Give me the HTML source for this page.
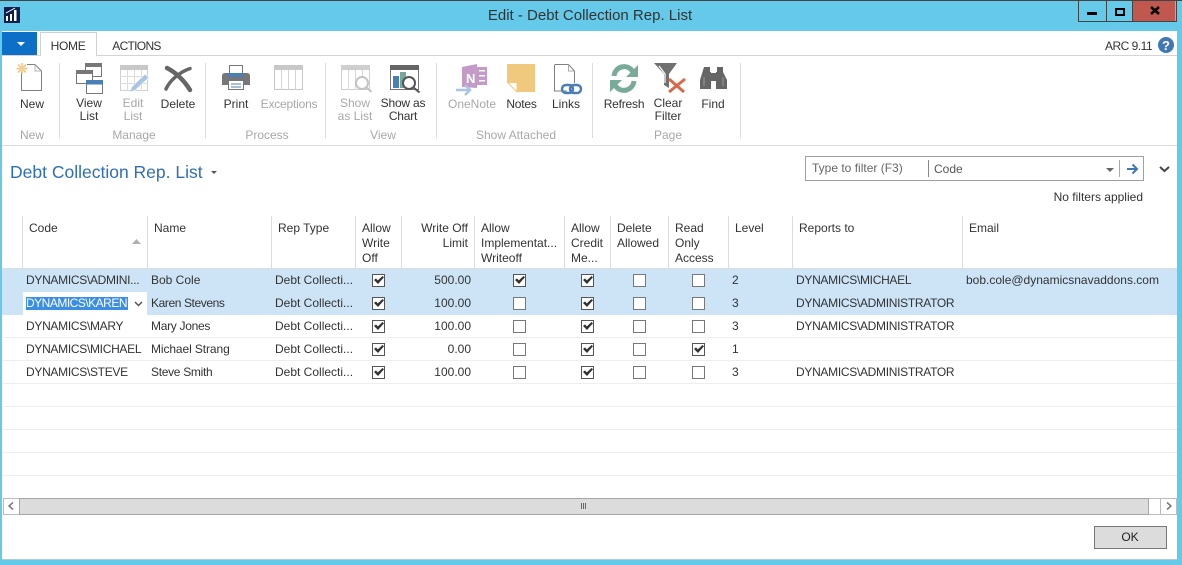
<!DOCTYPE html>
<html><head><meta charset="utf-8"><style>
html,body{margin:0;padding:0}
body{width:1182px;height:565px;position:relative;overflow:hidden;background:#65c9ea;font:12px "Liberation Sans",sans-serif;color:#333}
.t{position:absolute;white-space:nowrap;line-height:14px}
.c{text-align:center;transform:translateX(-50%)}
.r{text-align:right;transform:translateX(-100%)}
.g{color:#a8a8a8}
.u{letter-spacing:-.3px}
.b{position:absolute}
.v{position:absolute;width:1px;background:#dcdcdc}
.h{position:absolute;left:2px;width:1175px;height:1px;background:#eee}
.k{position:absolute;width:11px;height:11px;border:1px solid #777;background:#fff}
.k.x{border-color:#555}
.k.x:after{content:"";position:absolute;left:1px;top:1px;width:10px;height:8px;background:#333;clip-path:polygon(0 50%,20% 30%,38% 55%,85% 0,100% 15%,40% 100%)}
</style></head><body>
<div class="b" style="left:0;top:0;width:1182px;height:1px;background:#444"></div>
<div class="b" style="left:2px;top:31px;width:1175px;height:528px;background:#fff"></div>
<div class="b" style="left:2px;top:559px;width:1175px;height:1px;background:#b5c9d0"></div>
<div class="t c" style="left:590px;top:8px;font-size:15px;line-height:16px">Edit - Debt Collection Rep. List</div>

<div class="b" style="left:1078px;top:1px;width:97px;height:20px;border:1px solid #444;border-top:0"></div>
<div class="b" style="left:1106px;top:1px;width:1px;height:20px;background:#444"></div>
<div class="b" style="left:1132px;top:1px;width:1px;height:20px;background:#444"></div>
<div class="b" style="left:1133px;top:1px;width:42px;height:20px;background:#c0584f"></div>
<div class="b" style="left:1087px;top:12px;width:10px;height:3px;background:#000"></div>
<div class="b" style="left:1115px;top:8px;width:6px;height:4px;border:2px solid #000"></div>

<div class="b" style="left:2px;top:32px;width:35px;height:23px;background:#0e6fc6"></div>
<div class="b" style="left:40px;top:32px;width:55px;height:23px;border:1px solid #d0d0d0;border-bottom:0;background:#fff"></div>
<div class="b" style="left:2px;top:55px;width:38px;height:1px;background:#d4d4d4"></div>
<div class="b" style="left:96px;top:55px;width:1081px;height:1px;background:#d4d4d4"></div>
<div class="b" style="left:2px;top:145px;width:1175px;height:1px;background:#dcdcdc"></div>
<div class="t c" style="left:68px;top:39px;letter-spacing:-.3px">HOME</div>
<div class="t c" style="left:136.500px;top:39px;letter-spacing:-.7px">ACTIONS</div>
<div class="t" style="left:1105px;top:39px;letter-spacing:-.5px">ARC 9.11</div>

<div class="v" style="left:59px;top:63px;height:75px"></div>
<div class="v" style="left:205px;top:63px;height:75px"></div>
<div class="v" style="left:325px;top:63px;height:75px"></div>
<div class="v" style="left:436px;top:63px;height:75px"></div>
<div class="v" style="left:592px;top:63px;height:75px"></div>
<div class="v" style="left:740px;top:63px;height:75px"></div>

<div class="t c" style="left:32px;top:97px">New</div>
<div class="t c" style="left:89px;top:97px;line-height:13px">View<br>List</div>
<div class="t c g" style="left:133px;top:97px;line-height:13px">Edit<br>List</div>
<div class="t c" style="left:178px;top:97px">Delete</div>
<div class="t c" style="left:236px;top:97px">Print</div>
<div class="t c g" style="left:289px;top:97px;letter-spacing:-.2px">Exceptions</div>
<div class="t c g" style="left:355px;top:97px;line-height:13px">Show<br>as List</div>
<div class="t c" style="left:403px;top:97px;line-height:13px;letter-spacing:-.2px">Show as<br>Chart</div>
<div class="t c g" style="left:472px;top:97px">OneNote</div>
<div class="t c" style="left:521.500px;top:97px;letter-spacing:-.2px">Notes</div>
<div class="t c" style="left:566px;top:97px">Links</div>
<div class="t c" style="left:624px;top:97px;letter-spacing:-.2px">Refresh</div>
<div class="t c" style="left:668px;top:97px;line-height:13px">Clear<br>Filter</div>
<div class="t c" style="left:713px;top:97px">Find</div>
<div class="t c g" style="left:32px;top:128px">New</div>
<div class="t c g" style="left:134px;top:128px">Manage</div>
<div class="t c g" style="left:267px;top:128px">Process</div>
<div class="t c g" style="left:383px;top:128px">View</div>
<div class="t c g" style="left:516px;top:128px">Show Attached</div>
<div class="t c g" style="left:668px;top:128px">Page</div>

<div class="t" style="left:10px;top:162px;font-size:17.500px;line-height:20px;color:#2f6fb5">Debt Collection Rep. List</div>

<div class="b" style="left:805px;top:156px;width:337px;height:23px;border:1px solid #a0a0a0"></div>
<div class="v" style="left:928px;top:160px;height:17px;background:#888"></div>
<div class="v" style="left:1119px;top:160px;height:17px;background:#aaa"></div>
<div class="t" style="left:812px;top:161px;color:#666">Type to filter (F3)</div>
<div class="t" style="left:934px;top:162px;color:#555">Code</div>
<div class="t r" style="left:1143px;top:190px">No filters applied</div>

<div class="v" style="left:22px;top:216px;height:52px"></div>
<div class="v" style="left:147px;top:216px;height:52px"></div>
<div class="v" style="left:271px;top:216px;height:52px"></div>
<div class="v" style="left:355px;top:216px;height:52px"></div>
<div class="v" style="left:401px;top:216px;height:52px"></div>
<div class="v" style="left:474px;top:216px;height:52px"></div>
<div class="v" style="left:564px;top:216px;height:52px"></div>
<div class="v" style="left:610px;top:216px;height:52px"></div>
<div class="v" style="left:668px;top:216px;height:52px"></div>
<div class="v" style="left:728px;top:216px;height:52px"></div>
<div class="v" style="left:792px;top:216px;height:52px"></div>
<div class="v" style="left:962px;top:216px;height:52px"></div>
<div class="t" style="left:29px;top:221px">Code</div>
<div class="t" style="left:154px;top:221px">Name</div>
<div class="t" style="left:278px;top:221px">Rep Type</div>
<div class="t" style="left:362px;top:221px;line-height:15px">Allow<br>Write<br>Off</div>
<div class="t r" style="left:468px;top:221px;line-height:15px;text-align:right">Write Off<br>Limit</div>
<div class="t" style="left:481px;top:221px;line-height:15px">Allow<br>Implementat...<br>Writeoff</div>
<div class="t" style="left:571px;top:221px;line-height:15px">Allow<br>Credit<br>Me...</div>
<div class="t" style="left:617px;top:221px;line-height:15px">Delete<br>Allowed</div>
<div class="t" style="left:675px;top:221px;line-height:15px">Read<br>Only<br>Access</div>
<div class="t" style="left:735px;top:221px">Level</div>
<div class="t" style="left:799px;top:221px">Reports to</div>
<div class="t" style="left:969px;top:221px">Email</div>

<div class="b" style="left:2px;top:268px;width:1175px;height:1px;background:#d8dfe3"></div>
<div class="b" style="left:2px;top:269px;width:1175px;height:46px;background:#cce4f6"></div>
<div class="h" style="top:337px"></div><div class="h" style="top:360px"></div><div class="h" style="top:383px"></div><div class="h" style="top:406px"></div><div class="h" style="top:429px"></div><div class="h" style="top:452px"></div><div class="h" style="top:475px"></div>
<div class="b" style="left:23px;top:292px;width:124px;height:23px;background:#fff"></div>
<div class="b" style="left:26px;top:297px;width:102px;height:13px;background:#3a8ee6"></div>

<div class="t u" style="left:26px;top:273px">DYNAMICS\ADMINI...</div>
<div class="t" style="left:26px;top:296px;color:#fff;letter-spacing:-.5px">DYNAMICS\KAREN</div>
<div class="t u" style="left:26px;top:319px">DYNAMICS\MARY</div>
<div class="t u" style="left:26px;top:342px">DYNAMICS\MICHAEL</div>
<div class="t u" style="left:26px;top:365px">DYNAMICS\STEVE</div>
<div class="t" style="left:151px;top:273px">Bob Cole</div>
<div class="t" style="left:151px;top:296px;letter-spacing:-.4px">Karen Stevens</div>
<div class="t u" style="left:151px;top:319px">Mary Jones</div>
<div class="t" style="left:151px;top:342px;letter-spacing:-.1px">Michael Strang</div>
<div class="t u" style="left:151px;top:365px">Steve Smith</div>
<div class="t" style="left:275px;top:273px">Debt Collecti...</div>
<div class="t" style="left:275px;top:296px">Debt Collecti...</div>
<div class="t" style="left:275px;top:319px">Debt Collecti...</div>
<div class="t" style="left:275px;top:342px">Debt Collecti...</div>
<div class="t" style="left:275px;top:365px">Debt Collecti...</div>
<div class="t r" style="left:471px;top:273px">500.00</div>
<div class="t r" style="left:471px;top:296px">100.00</div>
<div class="t r" style="left:471px;top:319px">100.00</div>
<div class="t r" style="left:471px;top:342px">0.00</div>
<div class="t r" style="left:471px;top:365px">100.00</div>
<div class="t" style="left:732px;top:273px">2</div>
<div class="t" style="left:732px;top:296px">3</div>
<div class="t" style="left:732px;top:319px">3</div>
<div class="t" style="left:732px;top:342px">1</div>
<div class="t" style="left:732px;top:365px">3</div>
<div class="t u" style="left:796px;top:273px">DYNAMICS\MICHAEL</div>
<div class="t u" style="left:796px;top:296px">DYNAMICS\ADMINISTRATOR</div>
<div class="t u" style="left:796px;top:319px">DYNAMICS\ADMINISTRATOR</div>
<div class="t u" style="left:796px;top:365px">DYNAMICS\ADMINISTRATOR</div>
<div class="t" style="left:966px;top:273px">bob.cole@dynamicsnavaddons.com</div>

<div class="k x" style="left:372px;top:274px"></div><div class="k x" style="left:513px;top:274px"></div><div class="k x" style="left:581px;top:274px"></div><div class="k" style="left:633px;top:274px"></div><div class="k" style="left:692px;top:274px"></div>
<div class="k x" style="left:372px;top:297px"></div><div class="k" style="left:513px;top:297px"></div><div class="k x" style="left:581px;top:297px"></div><div class="k" style="left:633px;top:297px"></div><div class="k" style="left:692px;top:297px"></div>
<div class="k x" style="left:372px;top:320px"></div><div class="k" style="left:513px;top:320px"></div><div class="k x" style="left:581px;top:320px"></div><div class="k" style="left:633px;top:320px"></div><div class="k" style="left:692px;top:320px"></div>
<div class="k x" style="left:372px;top:343px"></div><div class="k" style="left:513px;top:343px"></div><div class="k x" style="left:581px;top:343px"></div><div class="k" style="left:633px;top:343px"></div><div class="k x" style="left:692px;top:343px"></div>
<div class="k x" style="left:372px;top:366px"></div><div class="k" style="left:513px;top:366px"></div><div class="k x" style="left:581px;top:366px"></div><div class="k" style="left:633px;top:366px"></div><div class="k" style="left:692px;top:366px"></div>

<div class="b" style="left:3px;top:498px;width:1172px;height:15px;border:1px solid #bbb"></div>
<div class="b" style="left:19px;top:498px;width:1128px;height:15px;background:#dcdcdc;border:1px solid #a6a6a6"></div>
<div class="b" style="left:1160px;top:499px;width:1px;height:15px;background:#bbb"></div>
<div class="b" style="left:1094px;top:526px;width:71px;height:21px;background:#dcdcdc;border:1px solid #777"></div>
<div class="t c" style="left:1130px;top:530px;color:#222">OK</div>

<svg class="b" style="left:0;top:0" width="1182" height="565" viewBox="0 0 1182 565" fill="none">
<rect x="4" y="7" width="16" height="16" fill="#0d1f4d"/>
<path d="M6 21v-5h2v5zM10 21v-7h2v7zM14 21V10h2.500v11z" fill="#fff"/><path d="M6 13l9-5" stroke="#fff"/>
<path d="M17 42h8l-4 4z" fill="#fff"/>
<path d="M1151 7l8 7M1159 7l-8 7" stroke="#000" stroke-width="2.500"/>
<circle cx="1166" cy="45" r="8" fill="#3f78b5"/>
<text x="1166" y="50" font-family="Liberation Sans" font-size="13" font-weight="bold" fill="#fff" text-anchor="middle">?</text>
<!-- New -->
<path d="M21.500 72V90.500H41.500V71L35 64.500H27" stroke="#808080"/><path d="M35 64.500V71H41.500" stroke="#b5b5b5"/>
<path d="M22 63v11M16.500 68.500h11M18 64.500l8 8M26 64.500l-8 8" stroke="#f2c27a" stroke-width="1.500"/><circle cx="22" cy="68.500" r="3" fill="#f5cf95"/>
<!-- View list -->
<rect x="85.500" y="63.500" width="16" height="13" fill="#fff" stroke="#777"/><rect x="85" y="63" width="17" height="4" fill="#777"/>
<rect x="76.500" y="70.500" width="16" height="13" fill="#fff" stroke="#777"/><rect x="76" y="70" width="17" height="4" fill="#777"/>
<rect x="86.500" y="80.500" width="16" height="13" fill="#fff" stroke="#777"/><rect x="86" y="80" width="17" height="4.500" fill="#4a7fb5"/>
<!-- Edit list -->
<rect x="120.500" y="65.500" width="27" height="25" stroke="#d0d0d0"/><rect x="120" y="65" width="28" height="5" fill="#c8c8c8"/>
<path d="M127.500 70v21M134.500 70v21M141.500 70v21M120 76.500h28M120 83.500h28" stroke="#dcdcdc"/>
<path d="M129.500 92.500l2.500-6 13-12.500 4 3.500-13.500 12.500z" fill="#a9c4e4" stroke="#fff" stroke-width=".6"/>
<!-- Delete -->
<path d="M167 68C175 72 184 80 190 90" stroke="#666" stroke-width="4.500" stroke-linecap="round"/><path d="M190 68.500C180 72 170 80 166 89" stroke="#666" stroke-width="3.500" stroke-linecap="round"/>
<!-- Print -->
<rect x="229.500" y="65.500" width="13" height="9" fill="#fff" stroke="#777"/>
<path d="M225 73h22q3 0 3 3v9h-6v-4h-16v4h-6v-9q0-3 3-3z" fill="#777"/>
<rect x="228" y="73" width="16" height="4" fill="#4a7fb5"/>
<rect x="228.500" y="80.500" width="15" height="9" fill="#fff" stroke="#777"/><path d="M231 84h10M231 87h10" stroke="#4a7fb5"/>
<!-- Exceptions -->
<rect x="274.500" y="65.500" width="28" height="24" stroke="#c8c8c8"/><rect x="274" y="65" width="29" height="5" fill="#c8c8c8"/>
<path d="M281.500 70v20M288.500 70v20M295.500 70v20" stroke="#d4d4d4"/>
<!-- Show as list -->
<rect x="341.500" y="65.500" width="28" height="24" stroke="#d0d0d0"/><rect x="341" y="65" width="29" height="5" fill="#cfcfcf"/>
<path d="M348.500 70v20M355.500 70v20M362.500 70v10" stroke="#d8d8d8"/>
<circle cx="362" cy="83" r="6" fill="#fff" stroke="#c4c4c4" stroke-width="2"/><path d="M366.500 87.500l5 4.500" stroke="#c4c4c4" stroke-width="2"/>
<!-- Show as chart -->
<rect x="390.500" y="65.500" width="28" height="24" stroke="#777"/><rect x="390" y="65" width="29" height="5" fill="#666"/>
<rect x="393" y="76" width="6" height="12" fill="#4a7fb5"/><rect x="400" y="72" width="6" height="16" fill="#75a898"/>
<circle cx="409" cy="83" r="6" fill="#fff" stroke="#555" stroke-width="2"/><path d="M413.500 87.500l6 5" stroke="#555" stroke-width="2"/>
<!-- OneNote -->
<path d="M462 67l15-3v24l-15-1z" fill="#c39bc6"/>
<path d="M477 67h10v18h-10z" fill="#c39bc6"/><path d="M479 70h6v1.500h-6zM479 75h6v1.500h-6zM479 80h6v1.500h-6z" fill="#fff"/>
<text x="466" y="83" font-family="Liberation Sans" font-size="13" font-weight="bold" fill="#fff">N</text>
<path d="M456 90h13M465 85l5 5-5 5" stroke="#a9c4e4" stroke-width="2.500"/>
<!-- Notes -->
<path d="M507 64h28v28h-18v-10h-10z" fill="#f0c97e"/><path d="M507.500 82.500h9.500v9.500z" fill="#fff" stroke="#f0c97e"/>
<!-- Links -->
<path d="M554.500 65v26H567M574.500 83V71L568.500 64.500H554.500" stroke="#808080"/><path d="M568.500 64.500V71H574.500" stroke="#aaa"/>
<rect x="562" y="85" width="11" height="8" rx="4" stroke="#4a7fb5" stroke-width="2.500"/><rect x="570" y="85" width="11" height="8" rx="4" stroke="#4a7fb5" stroke-width="2.500"/>
<!-- Refresh -->
<path d="M614 76C615 66 628 63 633 72" stroke="#78ab9a" stroke-width="5"/><path d="M638 65v12h-12z" fill="#78ab9a"/>
<path d="M634 81C633 91 620 94 615 85" stroke="#78ab9a" stroke-width="5"/><path d="M610 92v-12h12z" fill="#78ab9a"/>
<!-- Clear filter -->
<path d="M654 63h23l-8 11v14l-5-3V74z" fill="#707070"/><path d="M659 66l6 8v9" stroke="#fff" stroke-width="1.200"/>
<path d="M669 79l15 13M685 79l-16 13" stroke="#d9694a" stroke-width="3"/>
<!-- Find -->
<path d="M704 67h6v5h1v17h-11v-9zM717 67h6v5l4 8v9h-11V72h1z" fill="#666"/><rect x="711" y="73" width="5" height="8" fill="#666"/><path d="M704 77v9M723 77v9" stroke="#999"/>
<!-- arrows -->
<path d="M211 171h6l-3 3z" fill="#555"/>
<path d="M1106 168h8l-4 4z" fill="#666"/>
<path d="M1127 169h9M1132.500 164.500l4.500 4.500-4.500 4.500" stroke="#3f78b5" stroke-width="2"/>
<path d="M1160 167l4.500 4 4.500-4" stroke="#444" stroke-width="2"/>
<path d="M132 244h9l-4.500-5z" fill="#b0b0b0"/>
<path d="M135 302l3.500 3.500 3.500-3.500" stroke="#555" stroke-width="1.500"/>
<!-- scrollbar -->
<path d="M13 502.500l-4 3.500 4 3.500" stroke="#777" stroke-width="1.500"/>
<path d="M1167 502.500l4 3.500-4 3.500" stroke="#777" stroke-width="1.500"/>
<path d="M581.500 503v6M583.500 503v6M585.500 503v6" stroke="#666"/>
</svg>
</body></html>
